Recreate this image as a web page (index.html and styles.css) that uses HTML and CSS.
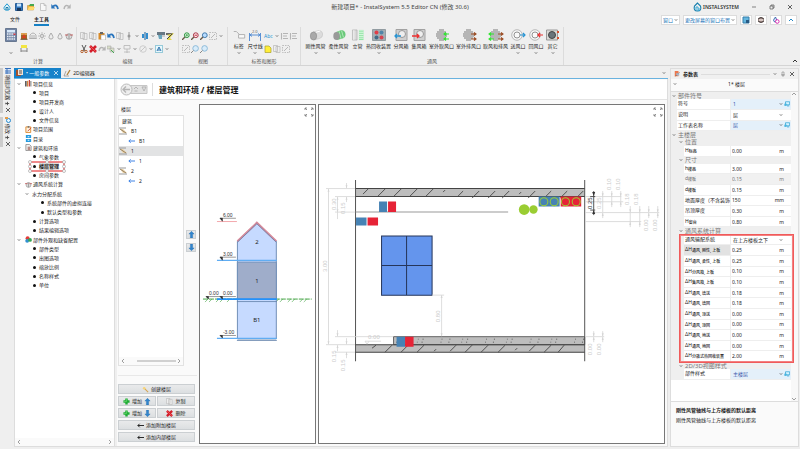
FILE: index.html
```html
<!DOCTYPE html>
<html lang="zh-CN">
<head>
<meta charset="utf-8">
<title>新建项目* - InstalSystem 5.5 Editor CN</title>
<link rel="stylesheet" href="styles.css">
</head>
<body>
<svg class="defs" aria-hidden="true">
  <symbol id="drop" viewBox="0 0 8 8"><path d="M4 .8 1.2 4.2q-1 3 2.8 3 3.800 0 2.800-3z" fill="#e8f7fc" stroke="#269bd0"/><path d="M3 7V4.500h2V7" fill="none" stroke="#167ba9"/></symbol>
  <symbol id="save" viewBox="0 0 8 8"><path d="M.5.500h7v7h-7z" fill="#3478bd" stroke="#285c94"/><path d="M2 .5h4v3H2z" fill="#c9e4fb"/><path d="M2 5h4v3H2z" fill="#18385d"/></symbol>
  <symbol id="open" viewBox="0 0 8 8"><path d="M.5 7V2.500h6V7z" fill="#efb43c" stroke="#b78320" stroke-width=".5"/><path d="m2 3 1-2h4v2z" fill="#47a84e"/><path d="m.5 7 1.500-3h6L6.500 7z" fill="#ffd96b"/></symbol>
  <symbol id="page" viewBox="0 0 8 8"><path d="M1.500.500h3.500l2 2v5h-5.500zM5 .5v2h2" fill="#f8f8f8" stroke="#b4b4b4" stroke-width=".7"/></symbol>
  <symbol id="undo" viewBox="0 0 8 8"><path d="M2 3.500q4-3 5 2.500" fill="none" stroke="#2874bd" stroke-width="1.800"/><path d="M.3 1v4.500h4z" fill="#2874bd"/></symbol>
  <symbol id="redo" viewBox="0 0 8 8"><path d="M6 3.500q-4-3-5 2.500" fill="none" stroke="#b5b5b5" stroke-width="1.500"/><path d="M7.700 1v4.500h-4z" fill="#b5b5b5"/></symbol>
  <symbol id="calc" viewBox="0 0 12 14"><path d="M.5.500h11v13H.5z" fill="#7386a5" stroke="#687891"/><path d="M2 2h8v2.500H2z" fill="#d8e9fa"/><path d="M2 6h8M2 8.500h8M2 11h8" stroke="#edf1f7" stroke-width="1.300" stroke-dasharray="1.500 .7"/><path d="M8.500 5.500h2V7h-2z" fill="#d53b45"/></symbol>
  <symbol id="burner" viewBox="0 0 8 8"><path d="M1 3h6v4H1z" fill="#a06627"/><path d="M1 1h6v2H1z" fill="#d99f52"/><path d="m2 6 2-4 2 4z" fill="#df3b20"/><path d="M.5 7.300h7" stroke="#634628"/></symbol>
  <symbol id="radiator" viewBox="0 0 8 8"><path d="M1 7V3q3-4 6 0v4M.5 6.500h7M3 7V3M5 7V3" fill="none" stroke="#aaa" stroke-width=".9"/></symbol>
  <symbol id="sun" viewBox="0 0 8 8"><circle cx="4" cy="4" r="1.500" fill="none" stroke="#aaa"/><path d="M4 0v2M4 6v2M0 4h2M6 4h2M1 1l1.500 1.500M7 1 5.500 2.500M1 7l1.500-1.500M7 7 5.500 5.500" stroke="#b5b5b5" stroke-width=".8"/></symbol>
  <symbol id="water" viewBox="0 0 8 8"><path d="M4 1Q1 5.500 2.500 6.600 4 7.500 5.500 6.600 7 5.500 4 1z" fill="#ededed" stroke="#aaa"/></symbol>
  <symbol id="fan" viewBox="0 0 8 8"><circle cx="4" cy="4.500" r="2.800" fill="#ddd" stroke="#999" stroke-width=".8"/><path d="M0 3h3M5 3h3" stroke="#c56666"/><path d="M4 2v5" stroke="#999"/></symbol>
  <symbol id="ruler" viewBox="0 0 8 8"><path d="M1 0h6v3H1z" fill="#f3e642"/><path d="M1 3v4M7 3v4M1 6h6" stroke="#858585"/></symbol>
  <symbol id="copy" viewBox="0 0 8 8"><path d="M.5.500h4v6h-4zM3 1.500h4v6H3z" fill="#eee" stroke="#b8b8b8" stroke-width=".7"/></symbol>
  <symbol id="paste" viewBox="0 0 8 8"><path d="M.5 1h6v6.500h-6z" fill="#d88a27"/><path d="M2 0h3v2H2z" fill="#666"/><path d="M3 3h4.500v5H3z" fill="#fff" stroke="#999" stroke-width=".5"/></symbol>
  <symbol id="node" viewBox="0 0 8 8"><path d="M4 0v8" stroke="#999"/><circle cx="4" cy="4" r="1.500" fill="#999"/></symbol>
  <symbol id="mirror" viewBox="0 0 8 8"><path d="M1 2h2v4H1zM5 1h2v6H5z" fill="#318cce"/><path d="M4 0v8" stroke="#145f9b"/></symbol>
  <symbol id="filter" viewBox="0 0 8 8"><path d="M0 0h8v3H0z" fill="#687884"/><path d="M1 3h4v4H2z" fill="#69a6bd"/><path d="M5 4h3" stroke="#aaa"/></symbol>
  <symbol id="brush" viewBox="0 0 8 8"><path d="M0 1h7v2H0z" fill="#686868"/><path d="m1 3 2 1-2 4h5l-2-2 4-5z" fill="#e4d750"/><path d="M1 7 6 2" stroke="#444"/></symbol>
  <symbol id="cut" viewBox="0 0 8 8"><path d="m2 0 3 6M6 0 3 6" stroke="#555"/><circle cx="2" cy="6.500" r="1.200" fill="none" stroke="#b7602b"/><circle cx="6" cy="6.500" r="1.200" fill="none" stroke="#b7602b"/></symbol>
  <symbol id="delete" viewBox="0 0 8 8"><path d="M1 1 7 7M7 1 1 7" stroke="#d31e2b" stroke-width="2.600"/><path d="M1.500 1.500 6.500 6.500" stroke="#f15355"/></symbol>
  <symbol id="layers" viewBox="0 0 8 8"><path d="M0 1h4v3H0zM3 3h4v4H3z" fill="#d9dfc9" stroke="#aaa" stroke-width=".6"/><path d="m4 5 3 3" stroke="#43a854"/></symbol>
  <symbol id="align" viewBox="0 0 8 8"><path d="M1 .5h6v3.500H1zM4 4v4M1 7h6" fill="none" stroke="#b5b5b5" stroke-width=".8"/></symbol>
  <symbol id="list" viewBox="0 0 8 8"><path d="M1.500 1v6.500M3 1.500h5M3 4h4M3 6.500h5" stroke="#b5b5b5" stroke-width="1.100"/></symbol>
  <symbol id="circle" viewBox="0 0 8 8"><circle cx="4" cy="4" r="3.300" fill="none" stroke="#c5c5c5" stroke-width=".8"/><path d="m2 6 4-4" stroke="#bbb" stroke-width=".8"/></symbol>
  <symbol id="textbox" viewBox="0 0 8 8"><path d="M.5.500h7v7h-7z" fill="#e8f7fc" stroke="#42a1bc" stroke-dasharray="1"/><path d="m2 6 2-4 2 4M3 5h2" fill="none" stroke="#2e72ad"/></symbol>
  <symbol id="zoomin" viewBox="0 0 8 8"><circle cx="4.800" cy="3.200" r="2.400" fill="#e3fae1" stroke="#2d9641"/><path d="M0 8l3-3" stroke="#685a49" stroke-width="1.300"/><path d="M3.500 3.200h2.600M4.800 2v2.500" stroke="#2d9641" stroke-width=".7"/></symbol>
  <symbol id="zoomout" viewBox="0 0 8 8"><circle cx="4.800" cy="3.200" r="2.400" fill="#fff0f0" stroke="#a93447"/><path d="M0 8l3-3" stroke="#685a49" stroke-width="1.300"/><path d="M3.500 3.200h2.600" stroke="#c22639"/></symbol>
  <symbol id="zoomfit" viewBox="0 0 8 8"><circle cx="4.800" cy="3.200" r="2.400" fill="#b9dcff" stroke="#427cad"/><path d="M0 8l3-3" stroke="#685a49" stroke-width="1.300"/></symbol>
  <symbol id="zoompage" viewBox="0 0 8 8"><circle cx="4.600" cy="3.400" r="2.800" fill="#d8ecfa" stroke="#86b5d5" stroke-width=".9"/><path d="M0 8l2.500-2.500" stroke="#888"/></symbol>
  <symbol id="grid" viewBox="0 0 8 8"><path d="M.5.500h7v7h-7z" fill="none" stroke="#b8b8b8" stroke-width=".9" stroke-dasharray="1.500 1"/><path d="m2 6 4-4" stroke="#b8b8b8"/></symbol>
  <symbol id="tag" viewBox="0 0 16 12"><path d="M2 2h3l4 4" fill="none" stroke="#aaa"/><path d="M7.500 5.500h7v4h-7z" fill="#f9f9f9" stroke="#aaa"/></symbol>
  <symbol id="dimension" viewBox="0 0 14 12"><path d="M1.500 4v8M12.500 4v8M2 6h10M4 4.500 2 6l2 1.500M10 4.500 12 6l-2 1.500" fill="none" stroke="#4986d1" stroke-width=".9"/></symbol>
  <symbol id="note" viewBox="0 0 8 8"><path d="M1 1h4l2 2v4.500H1z" fill="#ffee38" stroke="#aaa02f" stroke-width=".7"/></symbol>
  <symbol id="duct" viewBox="0 0 14 12"><path d="M4 3 10 1.500q4 .5 3.500 4.500 0 2.500-3 3.500L5 11z" fill="#dcdcdc" stroke="#bbb" stroke-width=".5"/><path d="M6 3.500l5-1.500" stroke="#fff"/><ellipse cx="4.500" cy="7" rx="3.200" ry="4" fill="#a9a9a9" stroke="#888" stroke-width=".6"/></symbol>
  <symbol id="flex" viewBox="0 0 14 12"><path d="M4 3 9.500 1q4 .5 4 4.500 0 3-3 4L5 11z" fill="#6ac87a"/><path d="m7 2.200 2 7.500M9.500 1.500l2 7" stroke="#b0e8b9"/><ellipse cx="4.500" cy="7" rx="3.200" ry="4" fill="#999"/></symbol>
  <symbol id="riser" viewBox="0 0 14 13"><path d="M1 1h5v11H1z" fill="#d9d9d9" stroke="#999" stroke-width=".5"/><path d="M8 1h5v11H8z" fill="#91e5a4"/><path d="M2.500 1v11M8 2h5M8 4h5M8 6h5M8 8h5M8 10h5" stroke="#fff" stroke-width=".7"/></symbol>
  <symbol id="recovery" viewBox="0 0 14 12"><path d="M.5.500h13v11H.5z" fill="#a3aeb4" stroke="#929ca1"/><circle cx="4.500" cy="3.500" r="2" fill="#e03e48"/><circle cx="9.500" cy="3.500" r="2" fill="#5084a8"/><circle cx="4.500" cy="8.500" r="2" fill="#416b87"/><circle cx="9.500" cy="8.500" r="2" fill="#d64350"/></symbol>
  <symbol id="split" viewBox="0 0 14 12"><path d="M2 .5h11v11H2z" fill="#cfcfcf" stroke="#a2a2a2"/><circle cx="8" cy="5" r="3.500" fill="#eee" stroke="#999"/><path d="M7 7H1m2-2L1 7l2 2" fill="none" stroke="#2794d4" stroke-width="1.300"/></symbol>
  <symbol id="collect" viewBox="0 0 14 12"><path d="M2 .5h11v11H2z" fill="#cfcfcf" stroke="#a2a2a2"/><circle cx="8" cy="5" r="3.500" fill="#eee" stroke="#999"/><path d="M0 7h7M5 5l2 2-2 2" fill="none" stroke="#ed3131" stroke-width="1.300"/></symbol>
  <symbol id="louver" viewBox="0 0 14 12"><path d="M4 1h5M2 3h9M1 5h11M1 7h11M2 9h9M4 11h5" stroke="#7d7d7d" stroke-width="1.100"/></symbol>
  <symbol id="valve" viewBox="0 0 14 12"><circle cx="6" cy="6" r="5.300" fill="#f5f5f5" stroke="#aaa" stroke-width=".8"/><circle cx="6" cy="6" r="3" fill="#f9f9f9" stroke="#888" stroke-width=".9"/></symbol>
  <symbol id="other" viewBox="0 0 14 12"><path d="M.5 1h11v10H.5z" fill="#dadad6" stroke="#999"/><circle cx="6" cy="6" r="3.500" fill="#69747a" stroke="#444"/><path d="M12 2v2M12 8v2" stroke="#d65030" stroke-width="2"/></symbol>
  <symbol id="caret" viewBox="0 0 4 4"><path d="m.8 1.300 1.200 1.200 1.200-1.200" fill="none" stroke="#444" stroke-width=".7"/></symbol>
  <symbol id="books" viewBox="0 0 8 8"><path d="M1 1v6.500" stroke="#333" stroke-width="1.500"/><path d="M3 1v6.500" stroke="#d28642" stroke-width="1.500"/><path d="M5 0v7.500" stroke="#c43730" stroke-width="1.300"/><path d="M6.700 1v6.500" stroke="#888" stroke-width="1.300"/></symbol>
  <symbol id="scope" viewBox="0 0 8 8"><path d="M1 1h5.500v6.500H1z" fill="#fff3de" stroke="#dc8426"/><path d="M3 0h2v2H3z" fill="#777"/><path d="m3 6 4-4" stroke="#c54238"/></symbol>
  <symbol id="catalog" viewBox="0 0 8 8"><path d="M1 0h6v3.500H1zM1 4.500h6V8H1z" fill="#259be0"/><path d="M0 4h8M3 2h2M3 6h2" stroke="#fff"/></symbol>
  <symbol id="building" viewBox="0 0 8 8"><path d="M1 .5h4l2 2v5H1z" fill="#f2f2f2" stroke="#777" stroke-width=".8"/><path d="M3 3h3v4H3z" fill="#b98b84"/></symbol>
  <symbol id="palette" viewBox="0 0 8 8"><circle cx="3" cy="2.500" r="2.300" fill="#e43d3b"/><circle cx="2.500" cy="5.500" r="2.200" fill="#318fd0"/><circle cx="5.700" cy="4.500" r="2.200" fill="#36a655"/></symbol>
  <symbol id="floor" viewBox="0 0 8 8"><path d="M0 1h7M0 7h8" stroke="#999"/><path d="M1 2h3l4 4H4z" fill="#ecd3a4"/><path d="m1 2 6 4" stroke="#7c6a54" stroke-width=".8"/></symbol>
  <symbol id="left" viewBox="0 0 8 8"><path d="M8 4H1M3 2 1 4l2 2" fill="none" stroke="currentColor" stroke-width="1.100"/></symbol>
  <symbol id="up" viewBox="0 0 8 8"><path d="M4 .3 7 3.500H5.300V8H2.700V3.500H1z" fill="#3185cd" stroke="#1e66a7" stroke-width=".4"/></symbol>
  <symbol id="down" viewBox="0 0 8 8"><path d="M4 7.700 7 4.500H5.300V0H2.700v4.500H1z" fill="#3185cd" stroke="#1e66a7" stroke-width=".4"/></symbol>
  <symbol id="plus" viewBox="0 0 8 8"><path d="M4 .5v7M.5 4h7" stroke="#20ad35" stroke-width="2.800"/><path d="M4 1v3H1" fill="none" stroke="#75dc76" stroke-width=".7"/></symbol>
  <symbol id="wand" viewBox="0 0 8 8"><path d="m3 3 4 4" stroke="#d5a552" stroke-width="1.300"/><circle cx="2.500" cy="2.500" r="1.500" fill="#f6d47b"/></symbol>
  <symbol id="expand" viewBox="0 0 10 10"><path d="M1 3V1h2M7 1h2v2M9 7v2H7M3 9H1V7M1 1l2 2M9 1 7 3M9 9 7 7M1 9l2-2" fill="none" stroke="#777" stroke-width=".8"/></symbol>
  <symbol id="x" viewBox="0 0 6 6"><path d="m1 1 4 4M5 1 1 5" stroke="currentColor" stroke-width=".7"/></symbol>
  <symbol id="monitor" viewBox="0 0 8 8"><path d="M2 1h5.500v4H2z" fill="#d6f3ff" stroke="#1e9bd1" stroke-width=".9"/><path d="M.5 3.500h3v3h-3z" fill="#46b4de"/><path d="M4 6.500h3" stroke="#1e9bd1"/></symbol>
  <symbol id="pencil" viewBox="0 0 8 8"><path d="M1 7 3 2" stroke="#aaa"/><path d="m4 6 3-5" stroke="#b08137" stroke-width="1.300"/><path d="M1 7h5" stroke="#777" stroke-width=".6"/></symbol>
</svg>

<header class="titlebar">
  <div class="quick">
    <button aria-label="InstalSystem"><svg><use href="#drop"/></svg></button>
    <button aria-label="保存" class="after-gap"><svg><use href="#save"/></svg></button>
    <button aria-label="打开"><svg><use href="#open"/></svg></button>
    <button aria-label="新建"><svg><use href="#page"/></svg></button>
    <button aria-label="撤销"><svg><use href="#undo"/></svg></button>
    <button aria-label="重做"><svg><use href="#redo"/></svg></button>
  </div>
  <div class="title">新建项目* - InstalSystem 5.5 Editor CN (修改 30.6)</div>
  <div class="window-side">
    <span class="brand"><svg viewBox="0 0 9 10"><path d="M4.500 1 1.500 4Q0 9 4.500 9 9 9 7.500 4z" fill="none" stroke="#177fae" stroke-width="1.100"/><path d="M3 8V5h2v4M6 6v3" fill="none" stroke="#36a8d5"/></svg>INSTALSYSTEM</span>
    <button aria-label="最小化"><svg viewBox="0 0 6 6"><path d="M1 3h4" stroke="#555" stroke-width=".7"/></svg></button>
    <button aria-label="还原"><svg viewBox="0 0 6 6"><path d="M1 2h3v3H1zM2 2V1h3v3H4" fill="none" stroke="#555" stroke-width=".7"/></svg></button>
    <button aria-label="关闭"><svg viewBox="0 0 6 6"><use href="#x"/></svg></button>
  </div>
</header>

<nav class="menubar">
  <a href="#file">文件</a>
  <a href="#main" class="current">主工具</a>
  <div class="layout-tools">
    <div class="picker"><select aria-label="窗口"><option>窗口</option></select><svg class="caret"><use href="#caret"/></svg></div>
    <div class="picker"><select aria-label="窗口布置"><option>更改屏幕的窗口布置</option></select><svg class="caret"><use href="#caret"/></svg></div>
    <button aria-label="屏幕"><svg viewBox="0 0 8 8"><path d="M1 1h6v6H1z" fill="#65b7df" stroke="#377eab"/><path d="M4 4h3v3H4z" fill="#285b85"/></svg></button>
    <button aria-label="主题"><svg viewBox="0 0 8 8"><circle cx="4" cy="4" r="3" fill="#a98b84"/><path d="M1 3q3-3 6 0M1 5q3 3 6 0" fill="none" stroke="#444"/><path d="M2 4h4" stroke="#fff"/></svg></button>
    <button aria-label="颜色"><svg viewBox="0 0 8 8"><path d="M3.500 1Q0 5 3 6l2-1z" fill="#e8f4ff" stroke="#3e69b0"/><circle cx="5.300" cy="5.500" r="1.800" fill="#fff" stroke="#d62aae"/></svg></button>
    <button aria-label="折叠"><svg viewBox="0 0 8 8"><path d="m2 5 2-2 2 2" fill="none" stroke="#2187c5"/></svg></button>
  </div>
</nav>

<section class="ribbon" aria-label="主工具">
  <div class="group calculate">
    <div class="tools">
      <button class="big" aria-label="计算"><svg class="tall"><use href="#calc"/></svg><svg class="caret"><use href="#caret"/></svg></button>
      <div class="rows">
        <div><button aria-label="热源"><svg><use href="#burner"/></svg></button><button aria-label="散热器"><svg><use href="#radiator"/></svg></button><button aria-label="冷却"><svg><use href="#sun"/></svg></button><button aria-label="给水"><svg><use href="#water"/></svg></button><button aria-label="排水"><svg><use href="#water"/></svg></button><button aria-label="通风"><svg><use href="#fan"/></svg></button></div>
        <div><button aria-label="测量"><svg><use href="#ruler"/></svg></button></div>
      </div>
    </div>
    <h2>计算</h2>
  </div>
  <div class="group edit">
    <div class="tools"><div class="rows">
      <div><button aria-label="复制"><svg><use href="#copy"/></svg></button><button aria-label="多重复制"><svg><use href="#copy"/></svg></button><button aria-label="粘贴"><svg><use href="#paste"/></svg></button><button aria-label="撤销"><svg><use href="#undo"/></svg></button><button aria-label="页面"><svg><use href="#copy"/></svg></button><button class="more" aria-label="节点"><svg><use href="#node"/></svg><svg class="caret"><use href="#caret"/></svg></button><button class="more" aria-label="镜像"><svg><use href="#mirror"/></svg><svg class="caret"><use href="#caret"/></svg></button><button aria-label="筛选"><svg><use href="#filter"/></svg></button><button aria-label="格式"><svg><use href="#brush"/></svg></button></div>
      <div><button aria-label="剪切"><svg><use href="#cut"/></svg></button><button aria-label="删除"><svg><use href="#delete"/></svg></button><button aria-label="重做"><svg><use href="#redo"/></svg></button><button class="more" aria-label="图层"><svg><use href="#layers"/></svg><svg class="caret"><use href="#caret"/></svg></button><button class="more" aria-label="对齐"><svg><use href="#align"/></svg><svg class="caret"><use href="#caret"/></svg></button><button class="more" aria-label="旋转"><svg><use href="#circle"/></svg><svg class="caret"><use href="#caret"/></svg></button><button class="more" aria-label="选择"><svg><use href="#textbox"/></svg><svg class="caret"><use href="#caret"/></svg></button></div>
    </div></div>
    <h2>编辑</h2>
  </div>
  <div class="group view">
    <div class="tools"><div class="rows">
      <div><button aria-label="放大"><svg><use href="#zoomin"/></svg></button><button aria-label="缩小"><svg><use href="#zoomout"/></svg></button><button aria-label="适合"><svg><use href="#zoomfit"/></svg></button><button class="more" aria-label="网格"><svg><use href="#grid"/></svg><svg class="caret"><use href="#caret"/></svg></button></div>
      <div><button aria-label="平移"><svg><use href="#grid"/></svg></button><button aria-label="上一视图"><svg><use href="#zoompage"/></svg></button><button aria-label="下一视图"><svg><use href="#zoompage"/></svg></button></div>
    </div></div>
    <h2>视图</h2>
  </div>
  <div class="group labels">
    <div class="tools">
      <button class="big"><svg class="pic"><use href="#tag"/></svg><span>标签</span><svg class="caret"><use href="#caret"/></svg></button>
      <button class="big"><svg class="pic" viewBox="0 0 14 12"><use href="#dimension"/><text class="t4" x="4" y="4">2.0</text></svg><span>尺寸线</span><svg class="caret"><use href="#caret"/></svg></button>
      <div class="rows">
        <div><button class="more abc"><span>Abc</span><svg class="caret"><use href="#caret"/></svg></button><button aria-label="列表"><svg><use href="#list"/></svg></button><button aria-label="图形"><svg><use href="#list"/></svg></button></div>
        <div><button aria-label="注释"><svg><use href="#note"/></svg></button><button aria-label="表格"><svg><use href="#copy"/></svg></button><button aria-label="图片"><svg><use href="#grid"/></svg></button></div>
      </div>
    </div>
    <h2>标签和图形</h2>
  </div>
  <div class="group air">
    <div class="tools">
      <button class="big w4"><svg class="pic"><use href="#duct"/></svg><span>刚性风管</span><svg class="caret"><use href="#caret"/></svg></button>
      <button class="big w4"><svg class="pic"><use href="#flex"/></svg><span>柔性风管</span><svg class="caret"><use href="#caret"/></svg></button>
      <button class="big w2"><svg class="pic"><use href="#riser"/></svg><span>立管</span></button>
      <button class="big w5"><svg class="pic"><use href="#recovery"/></svg><span>热回收装置</span><svg class="caret"><use href="#caret"/></svg></button>
      <button class="big w3"><svg class="pic"><use href="#split"/></svg><span>分风箱</span></button>
      <button class="big w3"><svg class="pic"><use href="#collect"/></svg><span>集风箱</span></button>
      <button class="big w5"><svg class="pic" viewBox="0 0 14 12"><use href="#louver"/><path d="M14 5H9m0 5h5M11 3.500 9 5l2 1.500M11 8.500 9 10l2 1.500" fill="none" stroke="#31e431" stroke-width="1.100"/></svg><span>室外取风口</span></button>
      <button class="big w5"><svg class="pic" viewBox="0 0 14 12"><use href="#louver"/><path d="M9 5h5m-5 5h5m-2-6.500L14 5l-2 1.500m0 2 2 1.500-2 1.500" fill="none" stroke="#9b4c24" stroke-width="1.100"/></svg><span>室外排风口</span></button>
      <button class="big w5"><svg class="pic" viewBox="0 0 14 12"><use href="#louver"/><path d="M5 5H0m5 5H0m2-6.500L0 5l2 1.500m0 2L0 10l2 1.500" fill="none" stroke="#31e431" stroke-width="1.100"/><path d="M9 5h5m-5 5h5m-2-6.500L14 5l-2 1.500m0 2 2 1.500-2 1.500" fill="none" stroke="#9b4c24" stroke-width="1.100"/></svg><span>取风和排风</span></button>
      <button class="big w3"><svg class="pic" viewBox="0 0 14 12"><use href="#valve"/><path d="M9 6h5m-2-2 2 2-2 2" fill="none" stroke="#2794d4" stroke-width="1.200"/></svg><span>送风口</span><svg class="caret"><use href="#caret"/></svg></button>
      <button class="big w3"><svg class="pic" viewBox="0 0 14 12"><use href="#valve"/><path d="M14 6H9m2-2L9 6l2 2" fill="none" stroke="#ed3131" stroke-width="1.200"/></svg><span>回风口</span><svg class="caret"><use href="#caret"/></svg></button>
      <button class="big w2"><svg class="pic"><use href="#other"/></svg><span>其它</span><svg class="caret"><use href="#caret"/></svg></button>
    </div>
    <h2>通风</h2>
  </div>
  <button class="collapse" aria-label="折叠功能区"><svg viewBox="0 0 8 8"><path d="m2 5 2-2 2 2" fill="none" stroke="#333"/></svg></button>
</section>

<main class="workspace">
  <aside class="rail">
    <button><svg viewBox="0 0 6 6"><path d="M0 0h6v6H0z" fill="#dceafa"/><path d="M0 .5h6M0 3h6M0 5h6M2 0v6" stroke="#4173b8"/></svg><span>项目浏览器</span><svg class="pin" viewBox="0 0 6 6"><path d="M1 2v2M1 3h4M3 1v4" stroke="#444"/></svg><svg viewBox="0 0 6 6"><use href="#x"/></svg></button>
    <button><svg viewBox="0 0 6 6"><circle cx="3.500" cy="3.500" r="2" fill="#eaf7ff" stroke="#278ad0"/><path d="M0 0h3v2H0z" fill="#e49c48"/></svg><span>修改</span><svg class="pin" viewBox="0 0 6 6"><path d="M1 2v2M1 3h4M3 1v4" stroke="#444"/></svg><svg viewBox="0 0 6 6"><use href="#x"/></svg></button>
  </aside>

  <section class="documents">
    <div class="doc-tabs" role="tablist">
      <button role="tab" aria-selected="true" class="active"><svg viewBox="0 0 8 8"><path d="M0 1h5v6H0z" fill="#a4512a"/><path d="M2 0h5v6H2z" fill="#f3e4d6"/><path d="M3 2h3M3 4h3" stroke="#555"/></svg><span>• 一般参数</span><svg class="close" viewBox="0 0 6 6"><use href="#x"/></svg></button>
      <button role="tab" aria-selected="false"><svg><use href="#pencil"/></svg><span>2D编辑器</span></button>
      <svg class="caret tab-list"><use href="#caret"/></svg>
    </div>
    <div class="doc-body">
      <nav class="tree" aria-label="参数">
        <ul>
          <li class="branch"><svg class="caret"><use href="#caret"/></svg><svg><use href="#books"/></svg>项目信息</li>
          <li class="leaf">项目</li><li class="leaf">项目开发商</li><li class="leaf">设计人</li><li class="leaf">文件信息</li>
          <li class="branch"><i></i><svg><use href="#scope"/></svg>项目范围</li>
          <li class="branch"><i></i><svg><use href="#catalog"/></svg>目录</li>
          <li class="branch"><svg class="caret"><use href="#caret"/></svg><svg><use href="#building"/></svg>建筑和环境</li>
          <li class="leaf">气象参数</li>
          <li class="leaf chosen"><span>楼层管理</span><svg class="frame" viewBox="0 0 38 13"><path d="M2 2h34v9H2z" fill="none" stroke="#eb6466" stroke-width="1.500"/><g fill="#fff" stroke="#999" stroke-width=".6"><circle cx="2" cy="2" r="1.500"/><circle cx="19" cy="2" r="1.500"/><circle cx="36" cy="2" r="1.500"/><circle cx="2" cy="6.500" r="1.500"/><circle cx="36" cy="6.500" r="1.500"/><circle cx="2" cy="11" r="1.500"/><circle cx="19" cy="11" r="1.500"/><circle cx="36" cy="11" r="1.500"/></g></svg></li>
          <li class="leaf">房间参数</li>
          <li class="branch"><svg class="caret"><use href="#caret"/></svg><svg><use href="#fan"/></svg>通风系统计算</li>
          <li class="sub"><svg class="caret"><use href="#caret"/></svg>水力分配系统</li>
          <li class="leaf deep">系统部件的虚拟连接</li><li class="leaf deep">默认类型和参数</li>
          <li class="leaf">计算选项</li><li class="leaf">结果编辑选项</li>
          <li class="branch"><svg class="caret"><use href="#caret"/></svg><svg><use href="#palette"/></svg>部件外观和缺省配置</li>
          <li class="leaf">部件类型</li><li class="leaf">出图选项</li><li class="leaf">缩放比例</li><li class="leaf">名称样式</li><li class="leaf">单位</li>
        </ul>
        <div class="hscroll"><svg viewBox="0 0 4 6"><path d="M3 1 1 3l2 2" fill="none" stroke="#777" stroke-width=".7"/></svg><svg viewBox="0 0 4 6"><path d="m1 1 2 2-2 2" fill="none" stroke="#777" stroke-width=".7"/></svg></div>
      </nav>

      <div class="page">
        <div class="page-head">
          <button class="nav-back" aria-label="返回"><svg viewBox="0 0 28 13"><path d="M9 2.500h18v8H9z" fill="#e2e2e2" stroke="#c6c6c6"/><circle cx="6.500" cy="6.500" r="5.500" fill="#eee" stroke="#bbb"/><path d="M10 6.500H3M6 3.500l-3 3 3 3" fill="none" stroke="#b4b4b4" stroke-width="1.300"/><path d="m14 6 2-2 2 2M14.500 8h3M22 4h4l-2 4z" fill="none" stroke="#aaa" stroke-width=".8"/></svg></button>
          <h1>建筑和环境 / 楼层管理</h1>
        </div>
        <div class="page-body">
          <div class="storeys">
            <div class="list-row">
              <div class="list-side">
                <h2>楼层</h2>
                <div class="list">
                  <div class="list-head">建筑</div>
                  <div class="item"><svg><use href="#floor"/></svg>B1</div>
                  <div class="item child"><svg><use href="#left"/></svg>B1</div>
                  <div class="item selected"><svg><use href="#floor"/></svg>1</div>
                  <div class="item child"><svg><use href="#left"/></svg>1</div>
                  <div class="item"><svg><use href="#floor"/></svg>2</div>
                  <div class="item child"><svg><use href="#left"/></svg>2</div>
                  <div class="hscroll"><svg viewBox="0 0 4 6"><path d="M3 1 1 3l2 2" fill="none" stroke="#777" stroke-width=".7"/></svg><b></b><svg viewBox="0 0 4 6"><path d="m1 1 2 2-2 2" fill="none" stroke="#777" stroke-width=".7"/></svg></div>
                </div>
              </div>
              <div class="movers"><button class="face" aria-label="上移"><svg><use href="#up"/></svg></button><button class="face" aria-label="下移"><svg><use href="#down"/></svg></button></div>
            </div>
            <div class="actions">
              <button class="face wide"><svg><use href="#wand"/></svg>创建楼层</button>
              <button class="face"><svg><use href="#plus"/></svg>增加<svg><use href="#up"/></svg></button>
              <button class="face"><svg><use href="#copy"/></svg>复制</button>
              <button class="face"><svg><use href="#plus"/></svg>增加<svg><use href="#down"/></svg></button>
              <button class="face"><svg><use href="#delete"/></svg>删除</button>
              <button class="face wide"><svg><use href="#left"/></svg>添加附加楼层</button>
              <button class="face wide"><svg><use href="#left"/></svg>添加内部楼层</button>
            </div>
          </div>

          <figure class="canvas elevation">
            <svg class="drawing" viewBox="200 105 115 338">
              <path d="M203 299h109" stroke="#45a445" stroke-dasharray="5 1"/>
              <path d="m205 302 3-3m1 3 3-3m4 3 3-3m1 3 3-3m4 3 3-3m46 3 3-3m1 3 3-3m5 3 3-3m1 3 3-3m5 3 3-3m1 3 3-3" stroke="#45a445" stroke-width=".6"/>
              <path d="m237.500 241 19.500-19 19.500 19v98h-39z" fill="#c6daff" stroke="#7190b8"/>
              <path d="M237.500 262h39v37h-39z" fill="#9fadca" stroke="#7190b8"/>
              <path d="m237.500 241 19.500-18.500 19.500 18.500" fill="none" stroke="#d88a9a" stroke-width="2"/>
              <path d="m237.500 242 19.500-18.500 19.500 18.500M237 301.500h40M237 340.500h40" fill="none" stroke="#6280a9" stroke-width=".8"/>
              <path d="M217 221.300h20" stroke="#f3a9ad"/>
              <path d="M217 260.300h60M217 338.300h60" stroke="#60adf3" stroke-width="1.300"/>
              <path d="M217 299h60" stroke="#2492fb" stroke-width="1.800"/>
              <path d="M220 218h16M220 257h16M206 296.500h30M220 335.500h16" stroke="#555" stroke-width=".6"/>
              <path d="m220 218 2.500 3v-3zM220 257l2.500 3v-3zM206 296.500l2.500 2.500v-2.500zM220 296.500l2.500 2.500v-2.500zM220 335.500l2.500 2.500v-2.500z" fill="#222" stroke="#222" stroke-width=".5"/>
              <g class="level"><text x="223" y="217">6.00</text><text x="223" y="256">3.00</text><text x="209" y="295">0.00</text><text x="223" y="295">0.00</text><text x="223" y="334">-3.00</text></g>
              <g class="t6"><text x="257" y="244">2</text><text x="257" y="283">1</text><text x="257" y="322">B1</text></g>
            </svg>
            <svg class="expand"><use href="#expand"/></svg>
          </figure>

          <figure class="canvas section">
            <svg class="drawing" viewBox="319 105 345 338">
              <defs>
                <marker id="tip" viewBox="0 0 4 4" refX="3.500" refY="2" markerWidth="4" markerHeight="4" orient="auto-start-reverse"><path d="m0 .8 4 1.200-4 1.200z" fill="context-stroke"/></marker>
              </defs>
              <path d="M355.500 188.500h229v8h-229zM355.500 344.500h229v7.500h-229z" fill="#bdbdbd"/>
              <path d="M393.500 336.500h191v8h-191z" fill="#bdbdbd" stroke="#444" stroke-width=".8"/>
              <path d="M397 339h187M396 342h188" stroke="#444" stroke-width=".8" stroke-dasharray=".8 7 1 12 .7 4 1 18"/>
              <path d="m363 194 5-5m10 7 7-7m9 7 7-7m9 7 7-7m9 7 7-7m10 3 2-2m13 6 5-5m9 7 7-7m9 7 7-7m7 7 7-7m10 3 2-2m7 6 7-7m9 7 7-7m9 7 7-7m9 7 7-7M372 348l4-3m9 7 7-7m9 7 7-7m9 7 7-7m10 6 2-2m14 2 6-6m9 7 7-7m9 7 7-7m10 7 7-7m10 5 2-2m12 3 6-6m9 7 7-7m7 7 6-7" fill="none" stroke="#444" stroke-width=".9"/>
              <path d="M355.500 180v181M584.500 180v181" stroke="#555"/>
              <path d="M355.500 188.500h229M355.500 196.500h229M355.500 344.500h229M355.500 352h229" stroke="#444"/>
              <path d="M355.500 212h152.500" stroke="#999"/>
              <path d="M379 201.500h8v10.500h-8zM356 217.500h10.500v8H356zM396.500 336.500h8.500v10h-8.500zM538.500 196.500h21v10h-21z" fill="#4682b4"/>
              <path d="M388 201.500h8v10.500h-8zM367.500 217.500H378v8h-10.500zM405 336.500h8.500v10H405zM560.500 196.500h20.500v10h-20.500z" fill="#e62336"/>
              <path d="M381.500 236h50.500v59h-50.500zM406.500 236v59M381.500 265.500h50.500" fill="#6495ed" stroke="#26365a"/>
              <circle cx="524" cy="209.500" r="5.300" fill="#9acd32"/><circle cx="533.300" cy="209.500" r="4.200" fill="#9acd32"/>
              <g fill="none" stroke="#9acd32"><circle cx="543.700" cy="201.700" r="4"/><circle cx="554" cy="201.700" r="4"/><circle cx="565.300" cy="201.700" r="4"/><circle cx="576" cy="201.700" r="4"/></g>
              <g stroke="#d4d4d4" stroke-width=".8" fill="none">
                <path d="M326 188.500h29M335 196.500h20M335 212h20M326 344.500h29M335 336.500h58M335 352h20M432 295h12M585 196.500h36M585 201.700h38M585 212.500h74M585 221.500h56M585 336.500h19"/>
                <g marker-start="url(#tip)" marker-end="url(#tip)"><path d="M328.500 189v155"/><path d="M337.500 197v15"/><path d="M441.500 295v41"/></g>
                <g marker-end="url(#tip)"><path d="M346.500 183v5"/><path d="M346.500 202v-5"/><path d="M337.500 330v6"/><path d="M337.500 351v-6"/><path d="M346.500 338v6"/><path d="M346.500 358v-6"/><path d="M602.500 191v5"/><path d="M602.500 218v-5"/><path d="M611.500 191v5"/><path d="M611.500 207v-5"/><path d="M620.500 191v5"/><path d="M620.500 207v-5"/><path d="M630 206v6"/><path d="M630 227v-5"/><path d="M639.500 206v6"/><path d="M639.500 227v-5"/><path d="M648.500 206v6"/><path d="M648.500 218v-5"/><path d="M657.500 206v6"/><path d="M657.500 218v-5"/><path d="M593.500 331v5"/><path d="M593.500 342v-5"/><path d="M602.500 331v5"/><path d="M602.500 342v-5"/></g>
                <path d="M337.500 212v7M602.500 196v16M611.500 196v6M620.500 196v6M630 212v10M639.500 212v10M365 341h16M365 341l2 3 2-3"/>
              </g>
              <path d="M593.500 191v24M590 196.500h5M590 210h5" stroke="#444" stroke-width=".9"/><path d="m592 192 1.500 4 1.500-4zM592 214l1.500-4 1.500 4z" fill="#333"/>
              <g class="dims">
                <text x="368" y="339">0.00</text>
                <text transform="translate(327 272)rotate(-90)">3.00</text><text transform="translate(336 210)rotate(-90)">0.30</text><text transform="translate(345 214)rotate(-90)">0.15</text><text transform="translate(440 322)rotate(-90)">0.80</text><text transform="translate(336 362)rotate(-90)">0.15</text><text transform="translate(345 371)rotate(-90)">0.15</text>
                <text class="dark" transform="translate(592 209)rotate(-90)">0.25</text><text transform="translate(601 209)rotate(-90)">0.25</text><text transform="translate(611 190)rotate(-90)">0.10</text><text transform="translate(620 190)rotate(-90)">0.10</text><text transform="translate(629 205)rotate(-90)">0.18</text><text transform="translate(638 205)rotate(-90)">0.18</text><text transform="translate(648 231)rotate(-90)">0.00</text><text transform="translate(657 231)rotate(-90)">0.00</text><text transform="translate(592 355)rotate(-90)">0.00</text><text transform="translate(601 355)rotate(-90)">0.00</text>
              </g>
            </svg>
            <svg class="expand"><use href="#expand"/></svg>
          </figure>
        </div>
      </div>
    </div>
  </section>

  <aside class="inspector">
    <header><svg viewBox="0 0 8 8"><path d="M1 0h5v7H1z" fill="#ec784e"/><path d="m2 7 5-5" stroke="#874e2b" stroke-width="1.300"/><path d="M3 3h4v3H3z" fill="#9fb9d0"/></svg><strong>参数表</strong><i></i><svg class="caret"><use href="#caret"/></svg><svg viewBox="0 0 6 6"><path d="M2 1h2v3H2zM1 4h4M3 4v2" fill="none" stroke="#777" stroke-width=".5"/></svg><svg viewBox="0 0 6 6"><use href="#x"/></svg></header>
    <div class="subject"><svg class="caret"><use href="#caret"/></svg><span>1* 楼层</span></div>
    <div class="props-area">
      <form class="props">
        <h3><svg class="caret"><use href="#caret"/></svg>部件符号</h3>
        <div class="row top blue"><label for="p1">符号</label><select id="p1"><option>1</option></select><svg class="caret"><use href="#caret"/></svg><svg class="mon"><use href="#monitor"/></svg></div>
        <div class="row top"><label for="p2">说明</label><select id="p2"><option>层</option></select><svg class="caret"><use href="#caret"/></svg><i class="mon"></i></div>
        <div class="row top blue"><label for="p3">工作表名称</label><select id="p3"><option>层</option></select><svg class="caret"><use href="#caret"/></svg><svg class="mon"><use href="#monitor"/></svg></div>
        <h3><svg class="caret"><use href="#caret"/></svg>主楼层</h3>
        <h3 class="inner"><svg class="caret"><use href="#caret"/></svg>位置</h3>
        <div class="row"><label for="p4">H<sub>标高</sub></label><input id="p4" value="0.00"><span>m</span></div>
        <h3 class="inner"><svg class="caret"><use href="#caret"/></svg>尺寸</h3>
        <div class="row"><label for="p5">h<sub>楼高</sub></label><input id="p5" value="3.00"><span>m</span></div>
        <div class="row readonly"><label for="p6">d<sub>楼板</sub></label><input id="p6" value="0.15" readonly><span>m</span></div>
        <div class="row"><label for="p7">d<sub>楼板</sub></label><input id="p7" value="0.15"><span>m</span></div>
        <div class="row"><label for="p8">地面厚度（不含装饰</label><input id="p8" value="150"><span>mm</span></div>
        <div class="row"><label for="p9">吊顶厚度</label><input id="p9" value="0.30"><span>m</span></div>
        <div class="row"><label for="p10">H<sub>窗台</sub></label><input id="p10" value="0.80"><span>m</span></div>
        <h3 class="inner"><svg class="caret"><use href="#caret"/></svg>通风系统计算</h3>
        <div class="marked">
          <div class="row"><label for="v0">通风输配系统</label><select id="v0"><option>在上方楼板之下</option></select><svg class="caret"><use href="#caret"/></svg><i class="mon"></i></div>
          <div class="row focus"><label for="v1">ΔH<sub>通风, 刚性, 上板</sub></label><input id="v1" value="0.25"><span>m</span></div>
          <div class="row"><label for="v2">ΔH<sub>通风, 柔性, 上板</sub></label><input id="v2" value="0.25"><span>m</span></div>
          <div class="row"><label for="v3">ΔH<sub>分风箱, 上板</sub></label><input id="v3" value="0.10"><span>m</span></div>
          <div class="row"><label for="v4">ΔH<sub>集风箱, 上板</sub></label><input id="v4" value="0.10"><span>m</span></div>
          <div class="row"><label for="v5">ΔH<sub>通风, 墙送</sub></label><input id="v5" value="0.18"><span>m</span></div>
          <div class="row"><label for="v6">ΔH<sub>通风, 墙回</sub></label><input id="v6" value="0.18"><span>m</span></div>
          <div class="row"><label for="v7">ΔH<sub>通风, 顶送</sub></label><input id="v7" value="0.00"><span>m</span></div>
          <div class="row"><label for="v8">ΔH<sub>通风, 顶回</sub></label><input id="v8" value="0.00"><span>m</span></div>
          <div class="row"><label for="v9">ΔH<sub>通风, 地送</sub></label><input id="v9" value="0.00"><span>m</span></div>
          <div class="row"><label for="v10">ΔH<sub>通风, 地回</sub></label><input id="v10" value="0.00"><span>m</span></div>
          <div class="row"><label for="v11">ΔH<sub>分散式热回收装置</sub></label><input id="v11" value="2.00"><span>m</span></div>
        </div>
        <h3 class="inner"><svg class="caret"><use href="#caret"/></svg>2D/3D视图样式</h3>
        <div class="row blue"><label for="p11">部件样式</label><select id="p11"><option>主楼层</option></select><svg class="caret"><use href="#caret"/></svg><svg class="mon"><use href="#monitor"/></svg></div>
      </form>
      <div class="vscroll"><svg viewBox="0 0 6 4"><path d="m1 3 2-2 2 2" fill="none" stroke="#777" stroke-width=".7"/></svg><svg viewBox="0 0 6 4"><path d="m1 1 2 2 2-2" fill="none" stroke="#777" stroke-width=".7"/></svg></div>
    </div>
    <div class="help"><strong>刚性风管轴线与上方楼板的默认距离</strong><p>刚性风管轴线与上方楼板的默认距离</p></div>
  </aside>
</main>
</body>
</html>
```
FILE: styles.css
```css
* { box-sizing: border-box; margin: 0; padding: 0; }
body {
  display: flex; flex-direction: column; min-height: 100vh;
  background: #efefef; color: #222;
  font: 5px/8px "Noto Sans", "Noto Sans CJK SC", sans-serif;
}
button, select, input { font: inherit; color: inherit; border: 0; background: none; border-radius: 0; appearance: none; outline: 0; min-width: 0; }
svg { display: block; width: 8px; height: 8px; flex: none; overflow: visible; }
.caret { width: 4px; height: 4px; }
h1, h2, h3 { font-size: inherit; font-weight: normal; }
.defs { position: absolute; width: 0; height: 0; }

.titlebar { display: grid; grid-template-columns: 1fr auto 1fr; align-items: center; height: 13px; }
.quick { display: flex; gap: 4px; padding-left: 3px; }
.title { font-size: 6px; color: #444; }
.window-side { display: flex; justify-content: flex-end; align-items: center; gap: 12px; padding-right: 7px; }
.window-side button svg { width: 6px; height: 6px; }
.brand { display: flex; align-items: center; gap: 1px; font-weight: 600; color: #333; }
.brand svg { width: 9px; height: 10px; }

.menubar { display: flex; height: 14px; padding: 0 3px 0 10px; gap: 14px; align-items: center; }
.menubar a { color: #222; text-decoration: none; line-height: 10px; border-bottom: 2px solid transparent; }
.menubar a.current { font-weight: bold; border-color: #1680c4; }
.layout-tools { display: flex; gap: 3px; margin-left: auto; }
.layout-tools button, .picker { height: 10px; background: #fff; border: 1px solid #dcdcdc; display: flex; align-items: center; justify-content: center; }
.layout-tools button { width: 12px; }
.picker { padding: 0 1px; }
.picker select { height: 8px; color: #1873b7; }

.ribbon { display: flex; height: 39px; border-bottom: 1px solid #d4d4d4; }
.group { display: flex; flex-direction: column; border-right: 1px solid #dcdcdc; padding: 0 3px; }
.group h2 { text-align: center; line-height: 8px; color: #555; }
.tools { display: flex; height: 30px; }
.calculate { width: 77px; }
.edit { width: 102px; }
.view { width: 49px; }
.labels { width: 73px; }
.air { width: 263px; }
.rows > div { display: flex; height: 13px; align-items: center; gap: 1px; padding-top: 2px; }
.rows { padding-top: 1px; }
.calculate .tools { gap: 3px; padding-left: 2px; }
.rows button { width: 8px; height: 8px; display: flex; align-items: center; }
.rows button.more { width: 15px; gap: 2px; }
.rows .abc { color: #2794d4; }
.big { display: flex; flex-direction: column; align-items: center; width: 16px; height: 28px; white-space: nowrap; }
.big span { line-height: 10px; }
.big .pic { width: 14px; height: 12px; margin-top: 2px; }
.big .tall { width: 12px; height: 14px; margin: 1px 0 9px; }
.calculate .big { width: 12px; }
.labels .tools { gap: 1px; }
.air .tools { justify-content: space-between; }
.w2 { width: 15px; } .w3 { width: 18px; } .w4 { width: 23px; } .w5 { width: 27px; }
.collapse { margin: auto 1px 0 auto; }

.workspace { flex: 1; display: grid; grid-template-columns: 14px minmax(0, 1fr) 130px; padding: 2px 0 2px; }
.rail { display: flex; flex-direction: column; gap: 4px; }
.rail button { display: flex; flex-direction: column; align-items: center; gap: 1px; width: 13px; padding: 0 2px 0 1px; border-left: 3px solid #ccc; }
.rail svg { width: 6px; height: 6px; }
.rail .pin { width: 5px; height: 5px; }
.rail span { writing-mode: vertical-rl; text-orientation: sideways; line-height: 6px; }

.documents { display: flex; flex-direction: column; margin-right: 2px; }
.doc-tabs { display: flex; height: 11px; border-bottom: 1px solid #69b2df; }
.doc-tabs button { display: flex; align-items: center; gap: 2px; padding: 0 2px; }
.doc-tabs .active { background: #1682ca; color: #fff; }
.doc-tabs .close { width: 6px; height: 6px; margin-left: 2px; }
.tab-list { margin: 3px 2px 0 auto; }
.doc-body { flex: 1; display: grid; grid-template-columns: 100px minmax(0, 1fr); column-gap: 2px; border: 1px solid #ddd; border-top: 0; }
.tree { background: #fff; display: flex; flex-direction: column; border-right: 1px solid #ddd; }
.tree ul { list-style: none; display: grid; grid-auto-rows: 1fr; height: 211px; }
.tree li { display: flex; align-items: center; white-space: nowrap; }
.branch { padding-left: 2px; }
.branch > svg:nth-child(2) { width: 7px; height: 7px; margin: 0 1px 0 4px; }
.branch i { width: 4px; }
.sub { padding-left: 10px; gap: 3px; }
.leaf { padding-left: 18px; gap: 3px; }
.leaf::before { content: ""; width: 3px; height: 3px; border-radius: 50%; background: #111; }
.leaf.deep { padding-left: 26px; }
.chosen { font-weight: bold; position: relative; }
.chosen span { background: #dfdfdf; }
.chosen .frame { position: absolute; left: 13px; top: -2px; width: 38px; height: 13px; }
.hscroll { display: flex; align-items: center; justify-content: space-between; margin-top: auto; height: 8px; padding: 0 2px; background: #fafafa; }
.hscroll svg { width: 4px; height: 6px; }
.hscroll b { width: 39px; height: 2px; margin-left: 10px; background: #d0d0d0; }

.page { display: flex; flex-direction: column; background: #fafafa; min-width: 0; }
.page-head { display: flex; align-items: center; background: #fff; height: 20px; margin: 1px 0 0 1px; border-bottom: 1px solid #e4e4e4; }
.nav-back { padding: 0 4px 0 2px; border-right: 1px solid #ddd; }
.nav-back svg { width: 28px; height: 13px; }
h1 { font: bold 8px/12px "Noto Sans", "Noto Sans CJK SC", sans-serif; padding-left: 6px; color: #111; white-space: pre; }
.page-body { flex: 1; display: grid; grid-template-columns: 79px minmax(0, 117fr) minmax(0, 348fr); gap: 2px; padding: 4px 2px 2px 1px; }
.storeys { display: flex; flex-direction: column; }
.list-row { flex: 1; display: flex; gap: 2px; }
.list-side { width: 66px; display: flex; flex-direction: column; }
.list-side h2 { padding: 1px 0 2px 3px; }
.list { flex: 1; display: flex; flex-direction: column; background: #fff; border: 1px solid #e2e2e2; }
.list-head { padding: 1px 0 1px 3px; }
.item { display: flex; align-items: center; gap: 4px; height: 10px; }
.item.child { padding-left: 9px; }
.child svg { color: #397fe5; width: 7px; }
.item.selected { background: #e2e3e4; }
.movers { display: flex; flex-direction: column; gap: 4px; justify-content: center; padding-top: 12px; }
.movers .face { width: 10px; height: 9px; }
.movers svg { width: 6px; height: 6px; }
.actions { display: grid; grid-template-columns: 1fr 1fr; gap: 2px 1px; margin-top: 9px; padding: 8px 2px 2px 0; border-top: 1px solid #e8e8e8; }
.face { display: flex; align-items: center; justify-content: center; gap: 2px; height: 10px; background: linear-gradient(#e9eaeb, #dcdfe1); border: 1px solid #cbcfd2; }
.face svg { width: 7px; height: 7px; }
.wide { grid-column: 1 / -1; }

.canvas { position: relative; background: #fff; border: 1px solid #777; display: flex; min-height: 0; }
.drawing { flex: 1; width: 100%; height: 100%; min-width: 0; }
.expand { position: absolute; right: 1px; top: 2px; width: 10px; height: 10px; }
.t4 { font-size: 4px; fill: #666; }
.t6 { font-size: 6px; fill: #222; text-anchor: middle; }
.level { font: 5px "Liberation Sans", sans-serif; fill: #333; }
.dims { font: 6px "Liberation Sans", sans-serif; fill: #ccc; }
.dims .dark { fill: #333; }

.inspector { display: flex; flex-direction: column; border: 1px solid #ddd; margin-right: 1px; background: #fafafa; }
.inspector header { display: flex; align-items: center; gap: 3px; padding: 0 3px; height: 10px; background: #f0f0f0; }
.inspector header svg { width: 6px; height: 6px; }
.inspector header .caret { width: 4px; height: 4px; }
.inspector header i { flex: 1; border-top: 1px solid #ddd; }
.subject { display: flex; align-items: center; height: 13px; padding: 0 2px 2px; border-bottom: 1px solid #ddd; }
.subject span { flex: 1; text-align: center; }
.props-area { display: grid; grid-template-columns: minmax(0, 1fr) 7px; height: 310px; background: #fff; border-bottom: 1px solid #ddd; }
.props { display: flex; flex-direction: column; height: 288px; background: #efefef; }
.props h3 { flex: 10 0 0; min-height: 0; display: flex; align-items: center; gap: 2px; padding-left: 1px; font-size: 6px; line-height: 8px; color: #777; }
.props h3.inner { padding-left: 8px; }
.row { flex: 13 0 0; min-height: 0; display: flex; align-items: center; margin-left: 13px; padding-right: 7px; background: #fff; border-bottom: 1px solid #eee; white-space: nowrap; }
.row.top { margin-left: 6px; }
.row label { width: 47px; align-self: stretch; line-height: 9px; padding-left: 1px; border-right: 1px solid #eee; flex: none; }
.row.top label { width: 54px; }
.row sub { font-size: 4px; line-height: 0; vertical-align: -1px; font-weight: 500; }
.row input, .row select { flex: 1; width: 10px; height: 8px; padding-left: 1px; }
.row:has(select) { padding-right: 1px; gap: 1px; }
.mon { width: 6px; height: 6px; }
.row.blue { background: linear-gradient(90deg, #fff 47px, #e4f0fa 47px); }
.row.top.blue { background: linear-gradient(90deg, #fff 54px, #e4f0fa 54px); }
.blue select { color: #3653a8; }
.row.readonly { background: #f1f1f1; color: #777; }
.focus label { background: #e2e2e2; }
.marked { flex: 156 0 12px; display: flex; flex-direction: column; position: relative; min-height: 0; }
.marked::after { content: ""; position: absolute; inset: -1px -3px -1px 8px; border: 1px solid #f05a5a; box-shadow: inset 0 0 0 1px #f48080; pointer-events: none; }
.vscroll { display: flex; flex-direction: column; justify-content: space-between; background: #f8f8f8; }
.vscroll svg { width: 6px; height: 4px; }
.help { padding: 4px 5px; }
.help p { margin-top: 2px; }
```
